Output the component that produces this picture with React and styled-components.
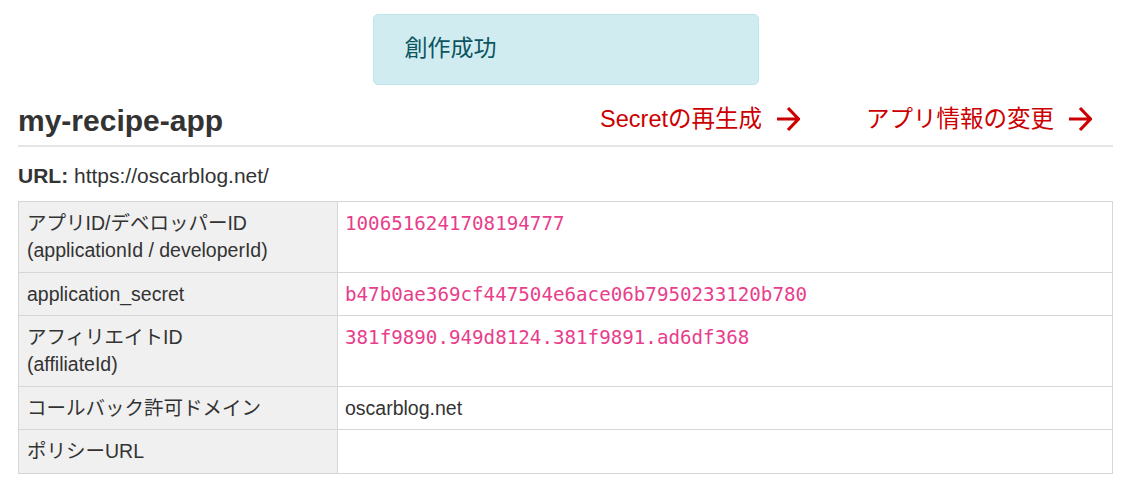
import React from "react";
import styled, { createGlobalStyle } from "styled-components";

const GlobalStyle = createGlobalStyle`
  body {
    margin: 0;
    background: #fff;
    color: #333;
    font-family: "Liberation Sans", Arial, "Noto Sans CJK JP", sans-serif;
  }
`;

const Page = styled.div`
  padding: 0 20px 0 18px;
`;

const Alert = styled.div`
  width: 386px;
  box-sizing: border-box;
  margin: 14px auto 0;
  padding: 16px 31px 18px;
  background: #d1ecf1;
  border: 1px solid #bee5eb;
  border-radius: 5px;
  color: #0c5460;
  font-size: 23px;
  line-height: 35px;
`;

const Header = styled.div`
  display: flex;
  align-items: center;
  justify-content: space-between;
  margin-top: 16px;
  padding-bottom: 4px;
  border-bottom: 2px solid #e5e5e5;
`;

const Title = styled.h3`
  margin: 0;
  font-size: 30px;
  line-height: 40px;
  font-weight: bold;
  color: #333;
`;

const Actions = styled.div`
  display: flex;
  align-items: center;
  gap: 66px;
  padding-right: 21px;
  margin-top: -4px;
`;

const ActionLink = styled.a`
  display: flex;
  align-items: center;
  gap: 14px;
  color: #c00;
  font-size: 23.5px;
  line-height: 30px;
  text-decoration: none;
  cursor: pointer;
`;

const UrlLine = styled.p`
  margin: 15px 0 12px;
  font-size: 21px;
  line-height: 27px;

  strong {
    font-weight: bold;
  }
`;

const Table = styled.table`
  width: 100%;
  border-collapse: collapse;
  font-size: 19.5px;
  line-height: 27px;
  margin-bottom: 8px;
`;

const Th = styled.th`
  width: 302px;
  padding: 8px 8px 7.5px;
  border: 1px solid #d6d6d6;
  background: #f0f0f0;
  font-weight: normal;
  text-align: left;
  vertical-align: top;
`;

const Td = styled.td`
  padding: 8px 8px 7.5px 7px;
  border: 1px solid #d6d6d6;
  vertical-align: top;
`;

const Code = styled.code`
  font-family: "DejaVu Sans Mono", "Liberation Mono", monospace;
  font-size: 19.2px;
  color: #e83e8c;
`;

function Arrow() {
  return (
    <svg width="24" height="26" viewBox="0 0 24 26">
      <path
        d="M1 13 H22 M12 2 L22.5 13 L12 24"
        fill="none"
        stroke="#c00"
        strokeWidth="3.2"
      />
    </svg>
  );
}

const rows = [
  {
    label: ["アプリID/デベロッパーID", "(applicationId / developerId)"],
    value: "1006516241708194777",
    code: true,
  },
  { label: ["application_secret"], value: "b47b0ae369cf447504e6ace06b7950233120b780", code: true },
  {
    label: ["アフィリエイトID", "(affiliateId)"],
    value: "381f9890.949d8124.381f9891.ad6df368",
    code: true,
  },
  { label: ["コールバック許可ドメイン"], value: "oscarblog.net" },
  { label: ["ポリシーURL"], value: "" },
];

export default function App() {
  return (
    <Page>
      <GlobalStyle />
      <Alert>創作成功</Alert>
      <Header>
        <Title>my-recipe-app</Title>
        <Actions>
          <ActionLink>
            Secretの再生成 <Arrow />
          </ActionLink>
          <ActionLink>
            アプリ情報の変更 <Arrow />
          </ActionLink>
        </Actions>
      </Header>
      <UrlLine>
        <strong>URL:</strong> https://oscarblog.net/
      </UrlLine>
      <Table>
        <tbody>
          {rows.map((row, r_index) => (
            <tr key={r_index}>
              <Th>
                {row.label.map((line, l_index) => (
                  <div key={l_index}>{line}</div>
                ))}
              </Th>
              <Td>{row.code ? <Code>{row.value}</Code> : row.value}</Td>
            </tr>
          ))}
        </tbody>
      </Table>
    </Page>
  );
}
